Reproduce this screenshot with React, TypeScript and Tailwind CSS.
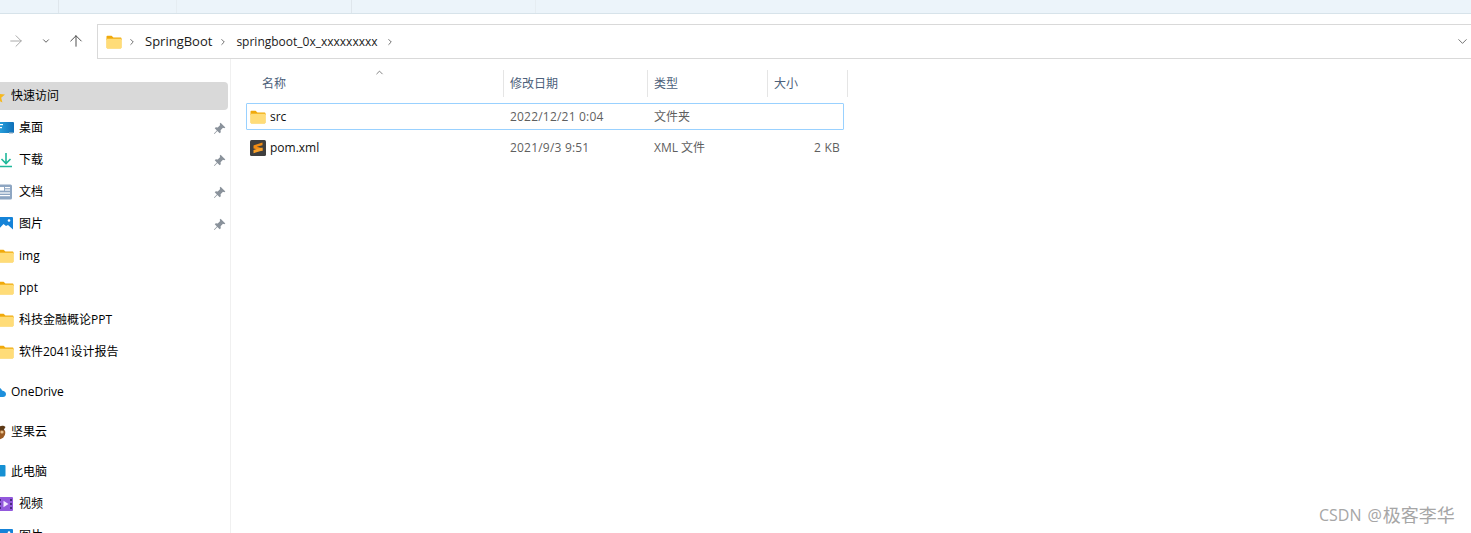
import React from "react";
import { ArrowRight, ArrowUp, ChevronDown, ChevronRight, ChevronUp } from "lucide-react";

const font = { fontFamily: '"Open Sans","Noto Sans CJK SC",sans-serif' };

function Folder({ size = 16 }: { size?: number }) {
  return (
    <svg width={size} height={size} viewBox="0 0 16 16" className="shrink-0">
      <path d="M0.5 5V2.6C0.5 2.1 0.9 1.7 1.4 1.7H5.6L7.4 3.5H14.6C15.1 3.5 15.5 3.9 15.5 4.4V6H0.5Z" fill="#f0a90c" />
      <rect x="0.5" y="4.4" width="15" height="10" rx="0.8" fill="#f7c948" />
      <rect x="0.5" y="5" width="15" height="9.4" rx="0.8" fill="#ffdc78" />
    </svg>
  );
}

function Pin() {
  return (
    <svg width="13" height="13" viewBox="0 0 12 12" className="shrink-0">
      <path d="M7 0.6L11.4 5L10.4 5.8L9.2 5.4L7 7.6L7.2 9.4L6.2 10.4L4 8.2L1.4 11L0.9 10.6L3.6 7.8L1.6 5.8L2.6 4.8L4.4 5L6.6 2.8L6.2 1.6Z" fill="#8a929b" />
    </svg>
  );
}

const icons: Record<string, React.ReactNode> = {
  star: (
    <svg width="16" height="16" viewBox="0 0 16 16"><path d="M8 1.5L10 6L15 6.5L11.2 9.7L12.4 14.6L8 12L3.6 14.6L4.8 9.7L1 6.5L6 6Z" fill="#f6b81f" /></svg>
  ),
  desktop: (
    <svg width="16" height="16" viewBox="0 0 16 16">
      <defs><linearGradient id="dk" x1="0" y1="0" x2="1" y2="0"><stop offset="0" stopColor="#2aa5e0" /><stop offset="1" stopColor="#0f6fb8" /></linearGradient></defs>
      <rect x="0" y="2" width="16" height="11" rx="1" fill="url(#dk)" />
      <rect x="1" y="4" width="4" height="1.2" fill="#fff" /><rect x="1" y="7" width="3" height="1.2" fill="#fff" />
      <rect x="11" y="12.4" width="4" height="1.2" fill="#9fb3c4" />
    </svg>
  ),
  download: (
    <svg width="16" height="16" viewBox="0 0 16 16" fill="none" stroke="#1fb89a" strokeWidth="1.6">
      <path d="M8 1V11M3.5 7L8 11.5L12.5 7" /><path d="M2 14.5H14" />
    </svg>
  ),
  doc: (
    <svg width="16" height="16" viewBox="0 0 16 16">
      <rect x="0" y="0.5" width="14" height="15" rx="1.5" fill="#8ea6c2" />
      <rect x="2" y="3" width="4" height="3.6" fill="#fff" /><rect x="7" y="3" width="5" height="1.2" fill="#fff" /><rect x="7" y="5.4" width="5" height="1.2" fill="#fff" />
      <rect x="2" y="8.4" width="10" height="1.2" fill="#fff" /><rect x="2" y="11" width="10" height="1.2" fill="#fff" />
    </svg>
  ),
  pic: (
    <svg width="16" height="16" viewBox="0 0 16 16">
      <rect x="0" y="1" width="15" height="14" rx="1" fill="#1583d8" />
      <path d="M0 14L5.5 8L8 10L10 9L15 13.6V15H0Z" fill="#fff" />
      <circle cx="11" cy="4.5" r="1.3" fill="#fff" />
    </svg>
  ),
  cloud: (
    <svg width="16" height="16" viewBox="0 0 16 16"><path d="M3 13C1 13 0 11.5 0 10C0 8.5 1 7.4 2.5 7.2C3 5 5 3.5 7.5 3.5C10 3.5 11.5 5 12 6.6C14.4 6.8 16 8.3 16 10C16 11.8 14.8 13 13 13Z" fill="#1c8fdc" /></svg>
  ),
  nut: (
    <svg width="16" height="16" viewBox="0 0 16 16">
      <ellipse cx="8.5" cy="9" rx="6.8" ry="6.4" fill="#9a5a22" />
      <path d="M9 3C11 1 14 1.5 15.5 3L13 7L10 6Z" fill="#5d3a18" />
      <circle cx="12" cy="8" r="1.6" fill="#e9c08a" />
    </svg>
  ),
  pc: (
    <svg width="16" height="16" viewBox="0 0 16 16">
      <rect x="0" y="1" width="15.5" height="11.5" rx="1" fill="#1690d3" />
      <rect x="0" y="13.5" width="6" height="1" fill="#8b9aa8" />
    </svg>
  ),
  video: (
    <svg width="16" height="16" viewBox="0 0 16 16">
      <rect x="0" y="1" width="15" height="14" rx="1" fill="#9258dc" />
      <path d="M5.5 4.8L10.5 8L5.5 11.2Z" fill="#f2e8ff" />
      <rect x="1" y="3" width="2" height="2" fill="#4a2b80" /><rect x="1" y="7" width="2" height="2" fill="#4a2b80" /><rect x="1" y="11" width="2" height="2" fill="#4a2b80" />
      <rect x="12" y="3" width="2" height="2" fill="#4a2b80" /><rect x="12" y="7" width="2" height="2" fill="#4a2b80" /><rect x="12" y="11" width="2" height="2" fill="#4a2b80" />
    </svg>
  ),
  folder: <Folder />,
};

type Item = { icon: string; label: string; sub?: boolean; pin?: boolean; active?: boolean; mt: string };

const items: Item[] = [
  { icon: "star", label: "快速访问", active: true, mt: "mt-[23px]" },
  { icon: "desktop", label: "桌面", sub: true, pin: true, mt: "mt-1" },
  { icon: "download", label: "下载", sub: true, pin: true, mt: "mt-1" },
  { icon: "doc", label: "文档", sub: true, pin: true, mt: "mt-1" },
  { icon: "pic", label: "图片", sub: true, pin: true, mt: "mt-1" },
  { icon: "folder", label: "img", sub: true, mt: "mt-1" },
  { icon: "folder", label: "ppt", sub: true, mt: "mt-1" },
  { icon: "folder", label: "科技金融概论PPT", sub: true, mt: "mt-1" },
  { icon: "folder", label: "软件2041设计报告", sub: true, mt: "mt-1" },
  { icon: "cloud", label: "OneDrive", mt: "mt-3" },
  { icon: "nut", label: "坚果云", mt: "mt-3" },
  { icon: "pc", label: "此电脑", mt: "mt-3" },
  { icon: "video", label: "视频", sub: true, mt: "mt-1" },
  { icon: "pic", label: "图片", sub: true, mt: "mt-1" },
];

function NavRow({ item }: { item: Item }) {
  return (
    <div className={`${item.mt} flex h-7 w-[228px] shrink-0 items-center overflow-hidden rounded-r-sm ${item.active ? "bg-[#d9d9d9]" : ""}`}>
      <div className={`flex min-w-0 flex-1 items-center gap-[5px] ${item.sub ? "-ml-[2px]" : "-ml-[10px]"}`}>
        <span className="w-4 shrink-0">{icons[item.icon]}</span>
        <span className="text-[12px] leading-none text-black">{item.label}</span>
      </div>
      {item.pin && <span className="mr-[2px]"><Pin /></span>}
    </div>
  );
}

const rowCols = "grid grid-cols-[257px_144px_120px_80px]";

function HeaderCell({ label, first }: { label: string; first?: boolean }) {
  return (
    <div className={`flex h-[27px] items-center border-r border-[#e5e5e5] ${first ? "pl-4" : "pl-[6px]"} text-[12px] text-[#4c607a]`}>
      {label}
    </div>
  );
}

export default function App() {
  return (
    <div className="flex h-[533px] w-[1471px] flex-col overflow-hidden bg-white" style={font}>
      <div className="flex h-[14px] shrink-0 border-b border-[#d7e3ea] bg-[#ecf4fa]">
        <div className="w-[59px] border-r border-[#dfe6ec]" />
        <div className="w-[118px] border-r border-[#e6edf2]" />
        <div className="w-[175px] border-r border-[#dfe6ec]" />
        <div className="w-[184px] border-r border-[#e6edf2]" />
      </div>

      <div className="mt-[10px] flex h-[35px] shrink-0 items-center">
        <div className="flex w-[97px] shrink-0 -translate-y-px items-center">
          <ArrowRight size={18} strokeWidth={1.2} className="ml-[7px] text-[#a0a0a0]" />
          <ChevronDown size={10} strokeWidth={2.2} className="ml-[16px] text-[#555]" />
          <ArrowUp size={18} strokeWidth={1.3} className="ml-4 text-[#4a4a4a]" />
        </div>
        <div className="flex h-full flex-1 items-center border-y border-l border-[#d9d9d9] pl-2 pr-px text-[12px] text-[#1a1a1a]">
          <Folder />
          <ChevronRight size={10} strokeWidth={2} className="ml-[5px] text-[#555]" />
          <span className="ml-2 text-[13px]">SpringBoot</span>
          <ChevronRight size={10} strokeWidth={2} className="ml-[6px] text-[#555]" />
          <span className="ml-2">springboot_0x_xxxxxxxxx</span>
          <ChevronRight size={10} strokeWidth={2} className="ml-[7px] text-[#555]" />
          <ChevronDown size={15} strokeWidth={1.3} className="ml-auto text-[#555]" />
        </div>
      </div>

      <div className="flex min-h-0 flex-1">
        <div className="flex w-[231px] shrink-0 flex-col overflow-hidden border-r border-[#f0f0f0]">
          {items.map((it, i) => (
            <NavRow key={i} item={it} />
          ))}
        </div>

        <div className="flex-1 pl-[15px] pt-[11px]">
          <div className="relative">
            <div className="grid w-[602px] grid-cols-[258px_144px_120px_80px]">
              <HeaderCell label="名称" first />
              <HeaderCell label="修改日期" />
              <HeaderCell label="类型" />
              <HeaderCell label="大小" />
            </div>
            <ChevronUp size={11} strokeWidth={1.6} className="absolute left-[128px] -top-[3px] text-[#555]" />
          </div>

          <div className={`${rowCols} mt-[6px] h-[27px] w-[598px] items-center rounded-[1px] border border-[#99d1ff] text-[12px] text-[#5f5f5f]`}>
            <div className="flex items-center gap-1 pl-[3px] text-[#111]">
              <Folder />
              <span>src</span>
            </div>
            <div className="pl-[6px] tracking-[0.2px]">2022/12/21 0:04</div>
            <div className="pl-[6px]">文件夹</div>
            <div />
          </div>

          <div className={`${rowCols} mt-[4px] h-[27px] w-[598px] items-center text-[12px] text-[#5f5f5f]`}>
            <div className="flex items-center gap-1 pl-[4px] text-[#111]">
              <svg width="16" height="16" viewBox="0 0 16 16" className="shrink-0">
                <rect x="0" y="0" width="16" height="16" rx="1.5" fill="#3f3f3f" />
                <path d="M12.5 2.6L3.5 5.4V8.4L12.5 11V8.2L6.8 6.8L12.5 5.2Z" fill="#f28c14" />
                <path d="M12.5 7.4L3.5 10V13.2L12.5 10.4Z" fill="#f9a12a" />
              </svg>
              <span>pom.xml</span>
            </div>
            <div className="pl-[7px] tracking-[0.2px]">2021/9/3 9:51</div>
            <div className="pl-[7px]">XML 文件</div>
            <div className="pr-[7px] text-right tracking-[0.2px]">2 KB</div>
          </div>
        </div>
      </div>

      <div className="absolute left-[1319px] top-[503px] flex h-6 items-center text-[16px] leading-6 text-[#a6a6a6]">
        <span>CSDN</span>
        <span className="ml-[6px]">@</span>
        <span className="ml-px text-[18px]">极客李华</span>
      </div>
    </div>
  );
}
